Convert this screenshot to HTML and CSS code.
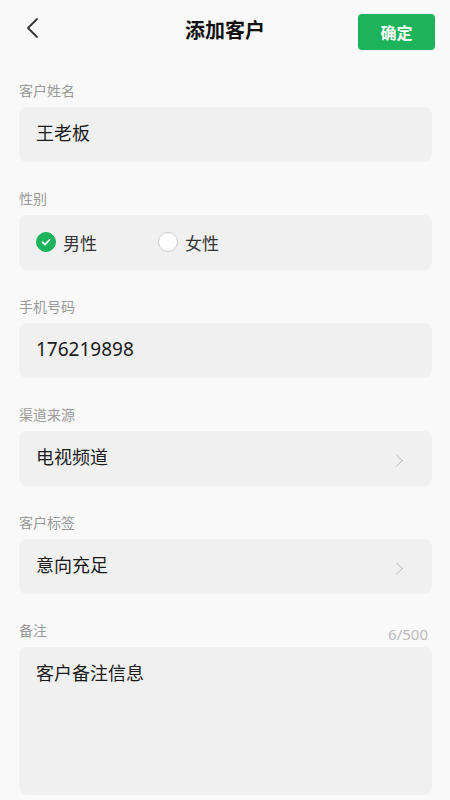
FILE: index.html
```html
<!DOCTYPE html>
<html lang="zh-CN">
<head>
  <meta charset="UTF-8" />
  <title>添加客户</title>
  <link rel="stylesheet" href="styles.css">
</head>
<body>

<div class="page">
  <!-- Header -->
  <div class="header">
    <span class="back">
      <svg width="14" height="22" viewBox="0 0 14 22"><path d="M12 2 L3 11 L12 20" fill="none" stroke="#333" stroke-width="1.8" stroke-linecap="round" stroke-linejoin="round"/></svg>
    </span>
    <h1>添加客户</h1>
    <button class="btn-ok">确定</button>
  </div>

  <div class="form">
    <div class="group">
      <div class="label">客户姓名</div>
      <div class="field">王老板</div>
    </div>

    <div class="group">
      <div class="label">性别</div>
      <div class="field radios">
        <span class="radio checked">
          <span class="dot">
            <svg width="12" height="12" viewBox="0 0 12 12"><path d="M2.5 6.2 L5 8.6 L9.6 3.8" fill="none" stroke="#fff" stroke-width="1.6" stroke-linecap="round" stroke-linejoin="round"/></svg>
          </span>男性
        </span>
        <span class="radio"><span class="dot"></span>女性</span>
      </div>
    </div>

    <div class="group">
      <div class="label">手机号码</div>
      <div class="field num">176219898</div>
    </div>

    <div class="group">
      <div class="label">渠道来源</div>
      <div class="field select">电视频道<span class="arrow"></span></div>
    </div>

    <div class="group">
      <div class="label">客户标签</div>
      <div class="field select">意向充足<span class="arrow"></span></div>
    </div>

    <div class="group">
      <div class="label-row">
        <span class="label">备注</span>
        <span class="count">6/500</span>
      </div>
      <div class="field note">客户备注信息</div>
    </div>
  </div>
</div>

</body>
</html>
```

FILE: styles.css
```css
body {
  margin: 0;
  background: #f9f9f9;
  font-family: "Noto Sans CJK SC", "Noto Sans", sans-serif;
  color: #1a1a1a;
}
.header {
  height: 64px;
  display: flex;
  align-items: center;
  justify-content: space-between;
  padding: 0 15px 0 25px;
  position: relative;
}
.back { display: flex; margin-top: -8px; }
.header h1 {
  position: absolute;
  left: 0;
  right: 0;
  top: 12px;
  margin: 0;
  text-align: center;
  font-size: 20px;
  font-weight: bold;
  line-height: 36px;
  color: #111;
  pointer-events: none;
}
.btn-ok {
  width: 77px;
  height: 36px;
  margin-top: -32px;
  position: relative;
  top: 16px;
  background: #1db35c;
  color: #fff;
  border: none;
  border-radius: 4px;
  font-family: inherit;
  font-size: 16px;
  font-weight: bold;
}
.form {
  padding: 16px 18px 0 19px;
}
.group {
  margin-bottom: 26px;
}
.label {
  font-size: 14px;
  line-height: 20px;
  color: #999;
  margin-bottom: 7px;
}
.label-row {
  display: flex;
  justify-content: space-between;
  align-items: flex-end;
}
.count {
  font-family: "Noto Sans", sans-serif;
  font-size: 15px;
  line-height: 20px;
  color: #bbb;
  margin: 0 4px 3px 0;
}
.field {
  height: 55px;
  box-sizing: border-box;
  background: #f0f0f0;
  border-radius: 8px;
  padding: 0 17px 5px;
  display: flex;
  align-items: center;
  font-size: 18px;
  color: #1a1a1a;
}
.num { font-family: "Noto Sans", sans-serif; font-size: 19px; padding-bottom: 4px; }
.select { justify-content: space-between; }
.arrow {
  width: 8px;
  height: 8px;
  border-top: 1.5px solid #c4c4c4;
  border-right: 1.5px solid #c4c4c4;
  transform: rotate(45deg);
  margin-right: 14px;
  margin-top: 8px;
}
.radios { padding-bottom: 1px; }
.radio {
  display: flex;
  align-items: center;
  width: 122px;
  font-size: 17px;
  color: #333;
}
.dot {
  width: 20px;
  height: 20px;
  box-sizing: border-box;
  border-radius: 50%;
  border: 1px solid #ccc;
  background: #fff;
  margin-right: 7px;
  display: flex;
  align-items: center;
  justify-content: center;
}
.checked .dot {
  background: #1db35c;
  border-color: #1db35c;
}
.note {
  height: 148px;
  align-items: flex-start;
  padding-top: 12px;
}
```
